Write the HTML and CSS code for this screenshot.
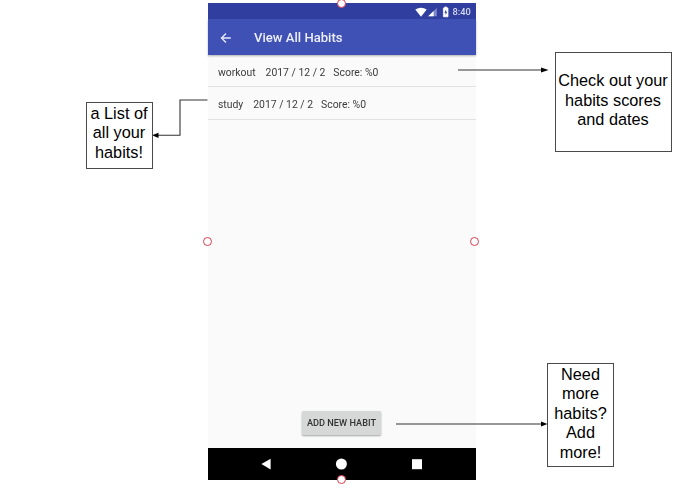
FILE: index.html
```html
<!DOCTYPE html>
<html lang="en">
<head>
<meta charset="utf-8">
<title>View All Habits</title>
<link rel="stylesheet" href="styles.css">
</head>
<body>
<main class="canvas">
  <section class="phone">
    <div class="status">
      <svg class="status-icons" width="36" height="12" viewBox="0 0 36 12">
        <path d="M.3 3.6Q6 .1 11.7 3.6L6 10.8Z" fill="#fff"/>
        <path d="M21.8 1.9V10.3H13.2Z" fill="#7f88c8"/>
        <path d="M18.6 5V10.3H13.2Z" fill="#fff"/>
        <path d="M28.4 2h1.2V1h2.2v1h1.2v8.8h-4.6Z" fill="#fff" stroke="#fff" stroke-width=".7"/>
        <path d="M31.1 3.4 29.4 6.8H30.6V9.2L32.2 5.7H31.1Z" fill="#303f9f"/>
      </svg>
      <span class="clock">8:40</span>
    </div>
    <header class="appbar">
      <svg class="back" width="12" height="12" viewBox="0 0 12 12"><path d="M10.8 6H1.7M6 1.5 1.5 6 6 10.5" fill="none" stroke="#e5e7f5" stroke-width="1.4"/></svg>
      <h1 class="title">View All Habits</h1>
    </header>
    <ul class="habits">
      <li class="habit"><span class="name">workout</span><span class="date">2017 / 12 / 2</span><span class="score">Score: %0</span></li>
      <li class="habit"><span class="name">study</span><span class="date">2017 / 12 / 2</span><span class="score">Score: %0</span></li>
    </ul>
    <div class="actions"><button class="add">ADD NEW HABIT</button></div>
    <nav class="navbar">
      <svg width="268" height="32" viewBox="0 0 268 32">
        <path d="M62.6 10.8V21.4L53.4 16.1Z" fill="#fff"/>
        <circle cx="133.4" cy="16" r="5.5" fill="#fff"/>
        <rect x="204" y="11.2" width="10" height="10" fill="#fff"/>
      </svg>
    </nav>
  </section>

  <svg class="overlay" width="688" height="490" viewBox="0 0 688 490">
    <g class="connector">
      <path d="M458 70H542"/>
      <path d="M207.5 100H180V135.3H158"/>
      <path d="M396 424H541"/>
    </g>
    <path d="M548.5 70 541 67.4V72.6ZM152 135.3 158.5 132.7V137.9ZM547.5 424 541 421.4V426.6Z"/>
    <g class="handle">
      <circle cx="341.5" cy="3.5" r="4"/>
      <circle cx="207.5" cy="241.5" r="4"/>
      <circle cx="474.5" cy="241.5" r="4"/>
      <circle cx="341.5" cy="479.5" r="4"/>
    </g>
  </svg>

  <p class="note note-list">a List of<br>all your<br>habits!</p>
  <p class="note note-scores">Check out your<br>habits scores<br>and dates</p>
  <p class="note note-add">Need<br>more<br>habits?<br>Add<br>more!</p>
</main>
</body>
</html>
```

FILE: styles.css
```css
* { box-sizing: border-box; }
body { margin: 0; background: #fff; }
.canvas { position: relative; width: 688px; height: 490px; overflow: hidden; }

.phone {
  position: absolute;
  left: 207.5px;
  top: 3px;
  width: 268px;
  height: 477px;
  display: flex;
  flex-direction: column;
  background: #fafafa;
  color: #3c3c3c;
  font-family: Roboto, sans-serif;
}
.status {
  height: 16px;
  display: flex;
  align-items: center;
  justify-content: flex-end;
  gap: 2px;
  padding: 1px 4.5px 0 0;
  background: #303f9f;
}
.clock { width: 18.5px; color: #d5d9ef; font-size: 9.3px; font-weight: 500; line-height: 12px; white-space: nowrap; }
.appbar {
  height: 36px;
  display: flex;
  align-items: center;
  padding: 1px 12px 0;
  background: #3f51b5;
  box-shadow: 0 1px 2px rgba(0, 0, 0, .3);
}
.title { margin: 1px 0 0 22.5px; color: #eceefa; font-size: 13.1px; font-weight: 500; line-height: 18px; }
.habits { margin: 0; padding: 0; list-style: none; }
.habit {
  height: 32.3px;
  display: flex;
  align-items: center;
  padding: 3px 10.5px 0;
  border-bottom: 1px solid #e2e2e2;
  font-size: 10.4px;
  white-space: pre;
}
.date { margin-left: 10px; }
.score { margin-left: 8px; }

/* The captured screen is slightly soft next to the crisp annotations. */
.clock, .status-icons, .back, .title, .name, .date, .score { filter: blur(.35px); }

.actions { flex: 1; display: flex; align-items: flex-end; justify-content: center; padding-bottom: 13px; }
.add {
  width: 79px;
  height: 24px;
  padding: 0;
  border: 0;
  border-radius: 1.5px;
  background: #d6d7d7;
  box-shadow: 0 1px 2px rgba(0, 0, 0, .35);
  color: #333;
  font: 500 9.2px/24px Roboto, sans-serif;
  white-space: nowrap;
  filter: blur(.35px);
}
.navbar { height: 32px; background: #000; }
.navbar svg { display: block; }

.overlay { position: absolute; left: 0; top: 0; }
.connector { fill: none; stroke: #333; stroke-width: 1.1; }
.handle { fill: #fff; stroke: #dc3b50; stroke-width: 1; }

.note {
  position: absolute;
  margin: 0;
  border: 1px solid #4a4a4a;
  background: #fff;
  color: #000;
  font: 16.3px/19.6px "Liberation Sans", sans-serif;
  text-align: center;
  white-space: nowrap;
}
.note-list { left: 85.5px; top: 102px; width: 67px; height: 67px; padding-top: .5px; }
.note-scores { left: 555px; top: 52px; width: 117px; height: 100px; padding: 18px 1px 0 0; }
.note-add { left: 547px; top: 363px; width: 67px; height: 104px; padding-top: .5px; }
```
